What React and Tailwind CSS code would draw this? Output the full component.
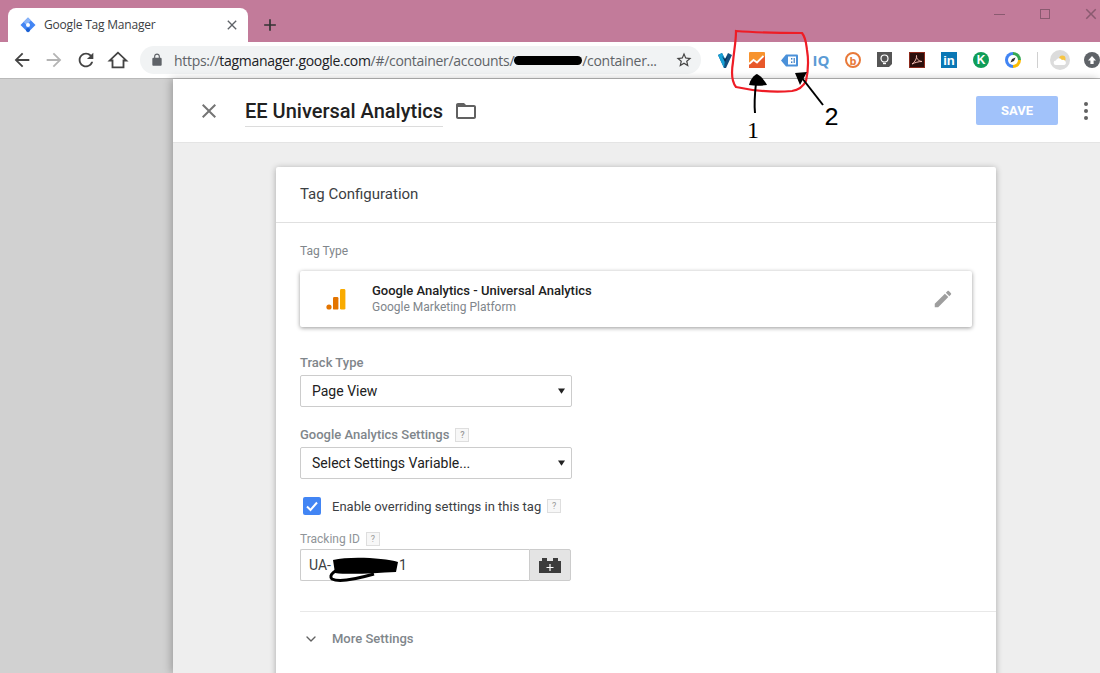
import { ChevronDown } from 'lucide-react';

// Material style glyphs used by the browser and the tag manager chrome
const PATHS = {
  back: 'M20 11H7.83l5.59-5.59L12 4l-8 8 8 8 1.41-1.41L7.83 13H20v-2z',
  forward: 'M12 4l-1.41 1.41L16.17 11H4v2h12.17l-5.58 5.59L12 20l8-8z',
  reload: 'M17.65 6.35C16.2 4.9 14.21 4 12 4c-4.42 0-7.99 3.58-7.99 8s3.57 8 7.99 8c3.73 0 6.84-2.55 7.73-6h-2.08c-.82 2.33-3.04 4-5.65 4-3.31 0-6-2.69-6-6s2.69-6 6-6c1.66 0 3.14.69 4.22 1.78L13 11h7V4l-2.35 2.35z',
  lock: 'M18 8h-1V6c0-2.76-2.24-5-5-5S7 3.24 7 6v2H6c-1.1 0-2 .9-2 2v10c0 1.1.9 2 2 2h12c1.1 0 2-.9 2-2V10c0-1.1-.9-2-2-2zM9 6c0-1.66 1.34-3 3-3s3 1.34 3 3v2H9V6z',
  star: 'M22 9.24l-7.19-.62L12 2 9.19 8.63 2 9.24l5.46 4.73L5.82 21 12 17.27 18.18 21l-1.63-7.03L22 9.24zM12 15.4l-3.76 2.27 1-4.28-3.32-2.88 4.38-.38L12 6.1l1.71 4.04 4.38.38-3.32 2.88 1 4.28L12 15.4z',
  close: 'M19 6.41L17.59 5 12 10.59 6.41 5 5 6.41 10.59 12 5 17.59 6.41 19 12 13.41 17.59 19 19 17.59 13.41 12z',
  plus: 'M19 13h-6v6h-2v-6H5v-2h6V5h2v6h6v2z',
  folder: 'M20 6h-8l-2-2H4c-1.1 0-1.99.9-1.99 2L2 18c0 1.1.9 2 2 2h16c1.1 0 2-.9 2-2V8c0-1.1-.9-2-2-2zm0 12H4V8h16v10z',
  pencil: 'M3 17.25V21h3.75L17.81 9.94l-3.75-3.75L3 17.25zM20.71 7.04c.39-.39.39-1.02 0-1.41l-2.34-2.34c-.39-.39-1.02-.39-1.41 0l-1.83 1.83 3.75 3.75 1.83-1.83z',
};

function Glyph({ name, className }) {
  return (
    <svg viewBox="0 0 24 24" className={className} fill="currentColor">
      <path d={PATHS[name]} />
    </svg>
  );
}

function HomeIcon() {
  return (
    <svg viewBox="0 0 24 24" className="w-[22px] h-[22px] text-[#444]" fill="none" stroke="currentColor" strokeWidth="2">
      <path d="M12 4 3 12.5h3V20h12v-7.5h3z" />
    </svg>
  );
}

function TagManagerLogo() {
  return (
    <svg viewBox="0 0 16 16" className="w-4 h-4 shrink-0">
      <path d="M8 0.5 15.5 8 8 15.5 0.5 8z" fill="#4285f4" />
      <path d="M8 0.5 11 3.5 6.5 8 3.5 5z" fill="#8ab4f8" />
      <circle cx="8" cy="8" r="2" fill="#fff" />
      <circle cx="8" cy="13" r="2" fill="#1a5fd0" />
    </svg>
  );
}

function AnalyticsExtension() {
  return (
    <svg viewBox="0 0 16 16" className="w-4 h-4">
      <rect width="16" height="16" rx="1" fill="#f7932e" />
      <path d="M0 16V12L4.5 8 8 10.5 16 4V16z" fill="#e8582a" />
      <path d="M0 12 4.5 8 8 10.5 14.5 4" fill="none" stroke="#fff" strokeWidth="1.8" />
    </svg>
  );
}

function TagExtension() {
  return (
    <svg viewBox="0 0 17 13" className="w-[17px] h-[13px]">
      <path d="M5 .5h11a1 1 0 0 1 1 1v10a1 1 0 0 1-1 1H5L0 6.5z" fill="#4a90d9" />
      <rect x="7" y="2.5" width="8" height="8" fill="#fff" />
      <rect x="10" y="4" width="1.4" height="1.6" fill="#3f7fc4" />
      <rect x="10" y="7.4" width="1.4" height="1.6" fill="#3f7fc4" />
      <rect x="12.6" y="4" width="1.2" height="5" fill="#3f7fc4" />
    </svg>
  );
}

function VExtension() {
  return (
    <svg viewBox="0 0 14 16" className="w-[14px] h-4">
      <path d="M0 3 4 1 7 7 10 1 14 3 8 16H6z" fill="#14507f" />
      <path d="M0 3 4 1 7 7 6 16z" fill="#17a2d8" />
      <path d="M4 4 7 7 10 4 7 10z" fill="#0d2c54" />
    </svg>
  );
}

function BulbExtension() {
  return (
    <svg viewBox="0 0 16 16" className="w-4 h-4">
      <path d="M0 0h15v12l-3 3H0z" fill="#555" />
      <circle cx="7.5" cy="6.5" r="3.5" fill="none" stroke="#fff" strokeWidth="1.2" />
      <path d="M6 11.5h3" stroke="#fff" strokeWidth="1.4" />
    </svg>
  );
}

function AcrobatExtension() {
  return (
    <svg viewBox="0 0 16 16" className="w-4 h-4">
      <rect x=".5" y=".5" width="15" height="15" fill="#2b0f0c" stroke="#8c2a1c" />
      <path d="M3 12C6 10 8 6 7.5 3.5 7 6 9 9 13 9.5 9.5 9.5 6 10.5 3 12z" fill="none" stroke="#f0b9b0" strokeWidth="1" />
    </svg>
  );
}

function CompassExtension() {
  return (
    <svg viewBox="0 0 16 16" className="w-4 h-4">
      <path d="M8 0a8 8 0 0 1 8 8H8z" fill="#34a853" />
      <path d="M16 8a8 8 0 0 1-8 8V8z" fill="#fbbc05" />
      <path d="M8 16A8 8 0 0 1 8 0v8z" fill="#4285f4" />
      <circle cx="8" cy="8" r="5" fill="#fff" />
      <path d="M5.5 10.5 7 7l3.5-1.5L9 9z" fill="#333" />
    </svg>
  );
}

function WeatherAvatar() {
  return (
    <div className="w-5 h-5 rounded-full bg-[#dcdcdc] flex items-center justify-center">
      <svg viewBox="0 0 16 12" className="w-[15px] h-[11px]">
        <circle cx="10" cy="4" r="3.5" fill="#f6c544" />
        <path d="M3 11a2.5 2.5 0 0 1 0-5 3.5 3.5 0 0 1 6.5-.5A2.8 2.8 0 0 1 12 11z" fill="#fff" />
      </svg>
    </div>
  );
}

function UpdateIcon() {
  return (
    <div className="w-4 h-4 rounded-full bg-[#5f6368] flex items-center justify-center">
      <svg viewBox="0 0 10 10" className="w-2.5 h-2.5">
        <path d="M5 1 9 5.5H6.6V9H3.4V5.5H1z" fill="#fff" />
      </svg>
    </div>
  );
}

function ExtensionSlot({ children, width = 'w-8' }) {
  return <div className={`${width} h-5 flex items-center justify-center shrink-0`}>{children}</div>;
}

function BrowserChrome() {
  return (
    <>
      <div className="h-[42px] bg-[#c27b9a] flex items-end pl-2 shrink-0">
        <div className="relative w-[240px] h-[34px] bg-white rounded-t-lg flex items-center pl-3 pr-2">
          <TagManagerLogo />
          <span className="ml-2 text-[12px] text-[#3c4043] font-['Open_Sans',sans-serif] tracking-[-0.2px] whitespace-nowrap">Google Tag Manager</span>
          <Glyph name="close" className="w-4 h-4 text-[#5f6368] ml-auto" />
        </div>
        <div className="h-[34px] flex items-center ml-3">
          <Glyph name="plus" className="w-5 h-5 text-[#333]" />
        </div>
        <div className="ml-auto self-start flex items-center gap-[28px] h-7">
          <div className="w-[18px] flex justify-center"><div className="w-[11px] h-px bg-[#8a5a70]" /></div>
          <div className="w-[18px] flex justify-center"><div className="w-[10px] h-[10px] border border-[#8a5a70]" /></div>
          <div className="w-[18px] flex justify-center"><Glyph name="close" className="w-[18px] h-[18px] text-[#8a5a70]" /></div>
        </div>
      </div>
      <div className="h-[37px] bg-white border-b border-[#b9b9b9] flex items-center shrink-0">
        <div className="w-[140px] flex items-center pl-[10px] shrink-0">
          <div className="w-6 flex justify-center"><Glyph name="back" className="w-[22px] h-[22px] text-[#444]" /></div>
          <div className="w-6 ml-2 flex justify-center"><Glyph name="forward" className="w-[22px] h-[22px] text-[#b4b4b4]" /></div>
          <div className="w-6 ml-2 flex justify-center"><Glyph name="reload" className="w-[22px] h-[22px] text-[#444]" /></div>
          <div className="w-6 ml-2 flex justify-center"><HomeIcon /></div>
        </div>
        <div className="w-[561px] h-7 rounded-full bg-[#f1f3f4] flex items-center pl-[10px] pr-2 shrink-0">
          <Glyph name="lock" className="w-[14px] h-[14px] text-[#5f6368] shrink-0" />
          <span className="ml-[10px] text-[14px] text-[#5f6368] font-['Open_Sans',sans-serif] tracking-[-0.3px] whitespace-nowrap flex items-center">
            https://<span className="text-[#202124]">tagmanager.google.com</span>/#/container/accounts/
            <span className="inline-block w-[68px] h-[9px] bg-black rounded-full" />
            /container...
          </span>
          <Glyph name="star" className="w-[18px] h-[18px] text-[#444] ml-auto shrink-0" />
        </div>
        <div className="flex items-center ml-2">
          <ExtensionSlot><VExtension /></ExtensionSlot>
          <ExtensionSlot><AnalyticsExtension /></ExtensionSlot>
          <ExtensionSlot><TagExtension /></ExtensionSlot>
          <ExtensionSlot><span className="text-[15px] font-bold text-[#5b9bd5] font-['Open_Sans',sans-serif]">IQ</span></ExtensionSlot>
          <ExtensionSlot>
            <div className="w-4 h-4 rounded-full border-2 border-[#e8793a] flex items-center justify-center text-[11px] font-bold text-[#e8793a] leading-none font-['Open_Sans',sans-serif]">b</div>
          </ExtensionSlot>
          <ExtensionSlot><BulbExtension /></ExtensionSlot>
          <ExtensionSlot><AcrobatExtension /></ExtensionSlot>
          <ExtensionSlot>
            <div className="w-4 h-4 bg-[#0a77b5] flex items-center justify-center text-[13px] font-bold text-white leading-none font-['Liberation_Sans',sans-serif]">in</div>
          </ExtensionSlot>
          <ExtensionSlot>
            <div className="w-4 h-4 rounded-full bg-[#0f9d58] flex items-center justify-center text-[12px] font-bold text-white leading-none font-['Liberation_Sans',sans-serif]">K</div>
          </ExtensionSlot>
          <ExtensionSlot><CompassExtension /></ExtensionSlot>
          <div className="w-px h-4 bg-[#d0d0d0] ml-2" />
          <ExtensionSlot width="w-[44px]"><WeatherAvatar /></ExtensionSlot>
          <ExtensionSlot width="w-5"><UpdateIcon /></ExtensionSlot>
        </div>
      </div>
    </>
  );
}

function HelpBadge() {
  return (
    <span className="inline-flex items-center justify-center w-[14px] h-[14px] border border-[#dedede] bg-[#f7f7f7] text-[9px] text-[#999] leading-none">?</span>
  );
}

function FieldLabel({ children, help, className }) {
  return (
    <div className={`flex items-center gap-[6px] ${className}`}>
      <span>{children}</span>
      {help && <HelpBadge />}
    </div>
  );
}

function SelectBox({ value }) {
  return (
    <div className="w-[272px] h-[32px] border border-[#ccc] rounded-[2px] bg-white flex items-center pl-[11px] pr-[6px] text-[14px] text-[#212121]">
      <span>{value}</span>
      <svg viewBox="0 0 8 6" className="w-[7px] h-[6px] ml-auto"><path d="M0 0h8L4 6z" fill="#222" /></svg>
    </div>
  );
}

function TagTypeCard() {
  return (
    <div className="h-[56px] bg-white rounded-[2px] shadow-[0_1px_4px_rgba(0,0,0,0.4)] flex items-center">
      <svg viewBox="0 0 20 22" className="w-5 h-[22px] ml-[26px]">
        <circle cx="3" cy="19" r="2.6" fill="#e37400" />
        <rect x="7" y="9" width="5.4" height="12.6" rx="1.2" fill="#e37400" />
        <rect x="14" y="1" width="5.4" height="20.6" rx="1.4" fill="#f9ab00" />
      </svg>
      <div className="ml-[26px]">
        <div className="text-[13px] leading-4 font-medium text-[#212121]">Google Analytics - Universal Analytics</div>
        <div className="text-[12px] leading-4 text-[#80868b]">Google Marketing Platform</div>
      </div>
      <Glyph name="pencil" className="w-[22px] h-[22px] text-[#9e9e9e] ml-auto mr-[18px]" />
    </div>
  );
}

function TagConfiguration() {
  return (
    <div className="ml-[103px] w-[720px] mt-6 bg-white rounded-t-[2px] shadow-[0_1px_6px_rgba(0,0,0,0.3)] pb-10">
      <div className="h-[56px] border-b border-[#e0e0e0] pl-6 flex items-center text-[15px] text-[#3c4043]">Tag Configuration</div>
      <div className="pl-6 pr-6">
        <div className="mt-5 mb-3 text-[12px] leading-4 text-[#80868b]">Tag Type</div>
        <TagTypeCard />
        <FieldLabel className="mt-7 mb-1 text-[13px] leading-4 font-medium text-[#80868b]">Track Type</FieldLabel>
        <SelectBox value="Page View" />
        <FieldLabel help className="mt-5 mb-1 text-[13px] leading-4 font-medium text-[#80868b]">Google Analytics Settings</FieldLabel>
        <SelectBox value="Select Settings Variable..." />
        <div className="mt-[18px] ml-[3px] flex items-center h-[18px]">
          <div className="w-[18px] h-[18px] rounded-[2px] bg-[#4285f4] flex items-center justify-center">
            <svg viewBox="0 0 14 14" className="w-[14px] h-[14px]" fill="none" stroke="#fff" strokeWidth="2">
              <path d="M2 7.5 5.5 11 12 3.5" />
            </svg>
          </div>
          <span className="ml-[11px] pt-px text-[13px] text-[#3c4043]">Enable overriding settings in this tag</span>
          <span className="ml-[6px] flex"><HelpBadge /></span>
        </div>
        <FieldLabel help className="mt-4 mb-[2px] text-[12px] leading-4 text-[#8f9498]">Tracking ID</FieldLabel>
        <div className="w-[271px] h-[32px] flex">
          <div className="w-[229px] border border-[#ccc] border-r-0 rounded-l-[2px] pl-2 flex items-center text-[14px] text-[#3c4043]">
            UA-<span className="ml-[68px]">1</span>
          </div>
          <div className="w-[42px] border border-[#ccc] bg-[#e4e4e4] rounded-r-[2px] flex items-center justify-center">
            <svg viewBox="0 0 24 15" className="w-6 h-[15px]">
              <path d="M1 3h3V0h5v3h6V0h5v3h3v12H1z" fill="#3c3c3c" />
              <path d="M12 6v7M8.5 9.5h7" stroke="#fff" strokeWidth="1.2" />
            </svg>
          </div>
        </div>
      </div>
      <div className="ml-6 mt-[30px] border-t border-[#e8e8e8] flex items-center h-[54px]">
        <ChevronDown className="w-4 h-4 text-[#616161] ml-[3px]" strokeWidth={2} />
        <span className="ml-[13px] text-[13px] font-medium text-[#80868b]">More Settings</span>
      </div>
    </div>
  );
}

function PanelHeader() {
  return (
    <div className="h-[64px] bg-white border-b border-[#e4e4e4] flex items-center shrink-0">
      <Glyph name="close" className="w-6 h-6 text-[#757575] ml-6" />
      <div className="ml-6 h-[33px] border-b border-[#dcdcdc] text-[20px] font-medium leading-[34px] text-[#212121] whitespace-nowrap">EE Universal Analytics</div>
      <Glyph name="folder" className="w-[24px] h-[24px] text-[#616161] ml-[11px]" />
      <button className="ml-auto w-[82px] h-[29px] bg-[#a1c2fa] rounded-[2px] text-white text-[13px] font-bold">SAVE</button>
      <div className="w-[42px] pl-[14px] flex flex-col items-center gap-[3px]">
        <span className="w-1 h-1 rounded-full bg-[#616161]" />
        <span className="w-1 h-1 rounded-full bg-[#616161]" />
        <span className="w-1 h-1 rounded-full bg-[#616161]" />
      </div>
    </div>
  );
}

// Hand drawn notes on top of the screenshot
function Annotations() {
  return (
    <>
      <svg className="absolute inset-0 pointer-events-none" width="1100" height="673" viewBox="0 0 1100 673" fill="none">
        <path d="M736 31C760 33 785 33 802 33C806 38 806 43 807 50C809 62 808 72 806 81C803 87 798 90 792 91C770 93 750 90 736 87C732 82 731 74 733 62C734 50 736 42 736 31Z" stroke="#ee1c25" strokeWidth="2.2" />
        <path d="M755 113C754 103 755 92 756 83" stroke="#000" strokeWidth="2" />
        <path d="M749 85C750 80 754 75 757 74C761 76 765 81 767 85C761 86 755 86 749 85Z" fill="#000" />
        <path d="M823 105L802 78" stroke="#000" strokeWidth="2" />
        <path d="M795 73L807 72L800 85Z" fill="#000" />
        <path d="M333 560C350 556 385 558 398 562L396 572C375 573 350 575 335 573Z" fill="#000" />
        <path d="M345 567C335 570 328 575 332 579C340 583 360 578 374 574" stroke="#000" strokeWidth="3" />
      </svg>
      <span className="absolute left-[747px] top-[118px] text-[24px] leading-none text-black font-['Liberation_Serif',serif]">1</span>
      <span className="absolute left-[824px] top-[106px] text-[25px] leading-none text-black font-['Liberation_Mono',monospace]">2</span>
    </>
  );
}

export default function App() {
  return (
    <div className="relative w-[1100px] h-[673px] overflow-hidden flex flex-col bg-[#d1d1d1] font-['Roboto',sans-serif]">
      <BrowserChrome />
      <div className="flex-1 min-h-0 flex">
        <div className="w-[173px] shrink-0" />
        <div className="flex-1 min-w-0 flex flex-col bg-[#eeeeee] shadow-[-2px_0_8px_rgba(0,0,0,0.25)]">
          <PanelHeader />
          <TagConfiguration />
        </div>
      </div>
      <Annotations />
    </div>
  );
}
